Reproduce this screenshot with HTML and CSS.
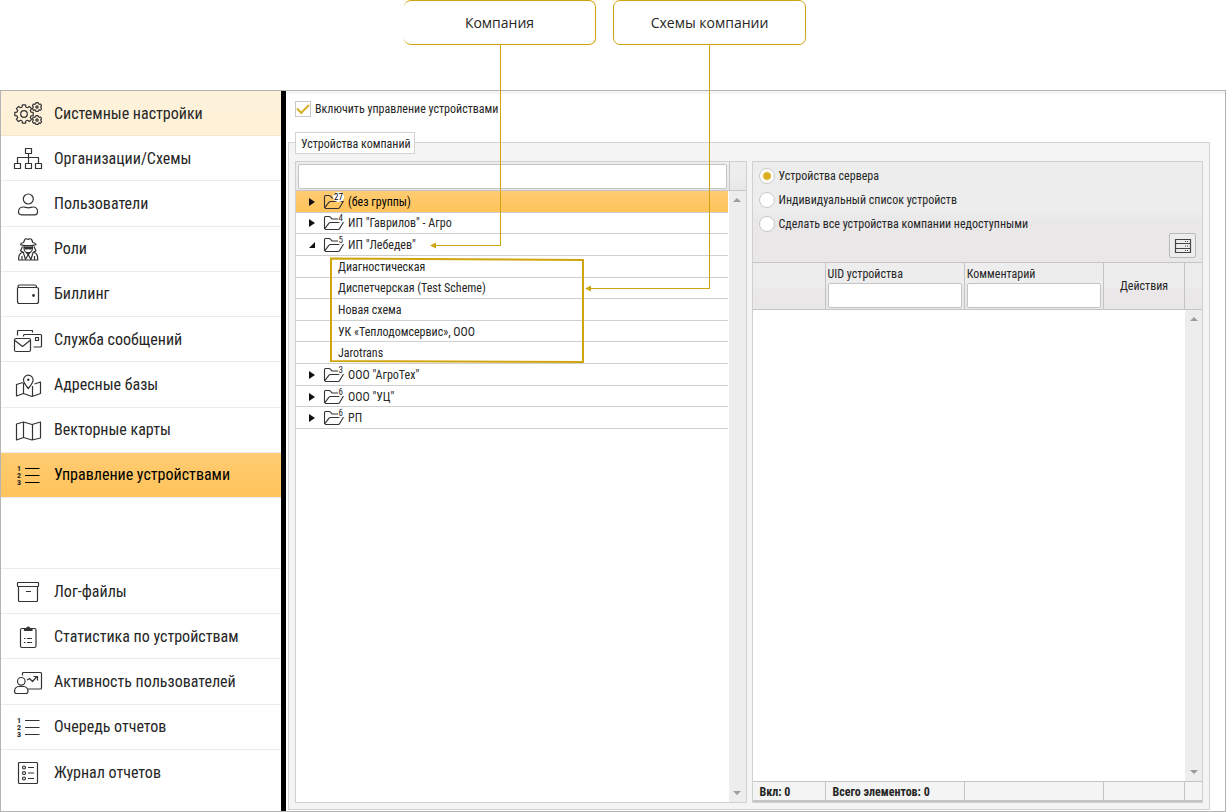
FILE: index.html
```html
<!DOCTYPE html>
<html lang="ru">
<head>
<meta charset="utf-8">
<title>Управление устройствами</title>
<link rel="stylesheet" href="styles.css">
</head>
<body>
<svg class="sprite" aria-hidden="true">
  <symbol id="gear" viewBox="-10 -10 20 20"><path d="M7-1.9 9.2-1.6 9.2 1.6 7 1.9 6.3 3.6 7.6 5.4 5.4 7.6 3.6 6.3 1.9 7 1.6 9.2-1.6 9.2-1.9 7-3.6 6.3-5.4 7.6-7.6 5.4-6.3 3.6-7 1.9-9.2 1.6-9.2-1.6-7-1.9-6.3-3.6-7.6-5.4-5.4-7.6-3.6-6.3-1.9-7-1.6-9.2 1.6-9.2 1.9-7 3.6-6.3 5.4-7.6 7.6-5.4 6.3-3.6z"/><circle r="3.3"/></symbol>
  <symbol id="cog" viewBox="-5 -5 10 10"><path d="M-1-4.400h2l.4 1.200 1 .5 1.200-.3 1 1.700-.8 1 0 .8.8 1-1 1.700-1.200-.3-1 .5-.4 1.200h-2l-.4-1.200-1-.5-1.200.3-1-1.700.8-1v-.8l-.8-1 1-1.700 1.200.3 1-.5z"/><circle r="1.100"/></symbol>
  <symbol id="folder" viewBox="0 0 22 16"><path d="M2.500 14V2.500q0-1 1-1H7q1 0 1.500.7L10 4h7.500q1 0 1 1V7.500M2.500 14.200 7 8.200q.5-.7 1.500-.7H21.200L17.500 13.700q-.4.800-1.400.800H3"/></symbol>
</svg>

<div class="callouts">
  <div class="callout callout-open">Компания</div>
  <div class="callout">Схемы компании</div>
</div>

<div class="app">
  <aside class="sidebar">
    <nav class="menu menu-main">
      <a class="item item-hover" href="#settings"><svg class="icon" viewBox="0 0 28 24"><use href="#gear" x="0" y="2" width="20" height="20"/><use href="#cog" x="18" y="0" width="10" height="10"/><use href="#cog" x="18" y="13" width="10" height="10"/></svg>Системные настройки</a>
      <a class="item" href="#orgs"><svg class="icon" viewBox="0 0 28 24"><path d="M11.500 1.500h6v5h-6zM.5 16.500h6v5h-6zM11.500 16.500h6v5h-6zM21.500 16.500h6v5h-6zM14.500 6.500v10M3.500 16.500v-6h21v6"/></svg>Организации/Схемы</a>
      <a class="item" href="#users"><svg class="icon" viewBox="0 0 28 24"><circle cx="14.300" cy="7" r="5"/><path d="M4.500 20c0-3.500 2.500-5 5-5 1.500 0 3 .8 4.800.8s3.300-.8 4.800-.8c2.500 0 4.500 1.500 4.500 5 0 2-1 2.800-3 2.800H7.500c-2 0-3-.8-3-2.800z"/></svg>Пользователи</a>
      <a class="item" href="#roles"><svg class="icon" viewBox="0 0 28 24"><path d="M6.500 7.500c2 1.600 13 1.600 15.500 0-.8-1.400-2-1.800-3.300-2-.5-2.500-1.500-4-2.500-3.700l-2 .6-2-.6c-1-.3-2 1.200-2.500 3.700-1.300.2-2.700.8-3.200 2zM10 9v2c0 3 2 5 4.200 5s4.300-2 4.300-5V9M8.500 9.500 6.500 14l2.700 1M20 9.500l2 4.500-2.700 1M9.200 15c-3 1-4.500 3-4.500 6v2h19v-2c0-3-1.500-5-4.400-6M9.200 15l2.300 7.500 2.700-5 2.700 5L19.300 15M8 19v4M20.500 19v4"/><path class="solid" d="M10.500 10h7.500l-1 2h-2l-.8-1-.8 1h-2zM12.500 15.500h3.500l-1.800 2z"/></svg>Роли</a>
      <a class="item" href="#billing"><svg class="icon" viewBox="0 0 28 24"><path d="M3.500 5.500v14q0 2 2 2h17q2 0 2-2v-12q0-2-2-2h-17q-1.500 0-1.500-1 0-1.500 1.500-1.500h15q2 0 2 2"/><circle class="solid" cx="19.500" cy="13.500" r=".8"/></svg>Биллинг</a>
      <a class="item" href="#messages"><svg class="icon" viewBox="0 0 28 24"><path d="M3.500 7.500v-4q0-1 1-1h14v2M9.500 8.500v-1q0-1 1-1H26.500q1 0 1 1v10.500q0 1-1 1H19.500M21.500 9.500h3v3h-3zM2 10.500H15q1.500 0 1.500 1.500V22q0 1.500-1.500 1.500H2Q.5 23.500.5 22V12Q.5 10.500 2 10.500zM1 12.500l7.500 6 7.500-6"/></svg>Служба сообщений</a>
      <a class="item" href="#addresses"><svg class="icon" viewBox="0 0 28 24"><path d="M9 9.500 2.500 11.500v11.500l7-2.500 8.500 3 8.500-3V9l-6 2M9.500 10v10.500M18.500 13v10M14.300 15.500C11 11.500 9.500 9.500 9.500 7a4.800 4.800 0 0 1 9.600 0c0 2.500-1.500 4.500-4.800 8.500z"/><circle class="solid" cx="14.300" cy="6.800" r=".6"/></svg>Адресные базы</a>
      <a class="item" href="#vector"><svg class="icon" viewBox="0 0 28 24"><path d="M2.500 6 9.500 4l8.500 2.500L26.500 4v16L18 22l-8.500-2.500L2.500 22zM9.500 4v15.500M18.500 6.500V22"/></svg>Векторные карты</a>
      <a class="item item-active" href="#devices" aria-current="page"><svg class="icon" viewBox="0 0 28 24"><path d="M11 5.500h14.500M11 12.500h14.500M11 19.500h14.500"/><g class="digits"><text x="3" y="8">1</text><text x="3" y="15">2</text><text x="3" y="22">3</text></g></svg>Управление устройствами</a>
    </nav>
    <nav class="menu menu-logs">
      <a class="item" href="#logs"><svg class="icon" viewBox="0 0 28 24"><path d="M4 2.500h20q.5 0 .5.500v3q0 .5-.5.500h-20q-.5 0-.5-.5V3q0-.5.500-.5zM4.500 6.500V20.500q0 1 1 1H22.500q1 0 1-1V6.500M12 11.500h5"/></svg>Лог-файлы</a>
      <a class="item" href="#stats"><svg class="icon" viewBox="0 0 28 24"><path d="M11 3.500H8q-1.500 0-1.500 1.500V21Q6.500 22.500 8 22.500H20.500q1.500 0 1.500-1.500V5q0-1.500-1.500-1.500h-3M10 13.500h1.500M13 13.500h5M10 17.500h1.500M13 17.500h5"/><path class="solid" d="M10.500 5.500v-2h2.200q0-1.500 1.500-1.500t1.600 1.500h2.200v2z"/></svg>Статистика по устройствам</a>
      <a class="item" href="#activity"><svg class="icon" viewBox="0 0 28 24"><path d="M8.500 5.500v-2q0-1 1-1H26.500q1 0 1 1v14.500q0 1-1 1H14M13 10l2.500-1.500 3 3 4.500-5M19.500 6.500h4v4"/><circle cx="7.300" cy="11.300" r="3.800"/><path d="M.5 21c0-2.500 2-4.500 4-4.500h5.500c2 0 4 2 4 4.500 0 1.500-.7 2.500-2 2.500H2.500c-1.300 0-2-1-2-2.500z"/></svg>Активность пользователей</a>
      <a class="item" href="#queue"><svg class="icon" viewBox="0 0 28 24"><path d="M11 5.500h14.500M11 12.500h14.500M11 19.500h14.500"/><g class="digits"><text x="3" y="8">1</text><text x="3" y="15">2</text><text x="3" y="22">3</text></g></svg>Очередь отчетов</a>
      <a class="item" href="#journal"><svg class="icon" viewBox="0 0 28 24"><path d="M5.500 1.500h17q1 0 1 1v19q0 1-1 1h-17q-1 0-1-1v-19q0-1 1-1zM14 6.500h6M14 12h6M14 17.500h6"/><circle cx="10" cy="6.500" r="1.500"/><circle cx="10" cy="12" r="1.500"/><circle cx="10" cy="17.500" r="1.500"/></svg>Журнал отчетов</a>
    </nav>
  </aside>

  <main class="content">
    <label class="check"><input type="checkbox" checked>Включить управление устройствами</label>
    <div class="tabs"><button class="tab" type="button">Устройства компаний</button></div>
    <div class="frame">
      <section class="panel">
        <div class="search"><div class="search-cell"><input class="field" type="text" aria-label="Поиск"></div><div class="search-end"></div></div>
        <div class="scroll-area">
          <ul class="tree">
            <li class="row row-selected"><span class="arrow"></span><span class="folder"><svg viewBox="0 0 22 16"><use href="#folder"/></svg><b class="count">27</b></span>(без группы)</li>
            <li class="row"><span class="arrow"></span><span class="folder"><svg viewBox="0 0 22 16"><use href="#folder"/></svg><b class="count">4</b></span>ИП "Гаврилов" - Агро</li>
            <li class="row"><span class="arrow arrow-open"></span><span class="folder"><svg viewBox="0 0 22 16"><use href="#folder"/></svg><b class="count">5</b></span>ИП "Лебедев"</li>
            <li class="row row-child">Диагностическая</li>
            <li class="row row-child">Диспетчерская (Test Scheme)</li>
            <li class="row row-child">Новая схема</li>
            <li class="row row-child">УК «Теплодомсервис», ООО</li>
            <li class="row row-child">Jarotrans</li>
            <li class="row"><span class="arrow"></span><span class="folder"><svg viewBox="0 0 22 16"><use href="#folder"/></svg><b class="count">3</b></span>ООО "АгроТех"</li>
            <li class="row"><span class="arrow"></span><span class="folder"><svg viewBox="0 0 22 16"><use href="#folder"/></svg><b class="count">6</b></span>ООО "УЦ"</li>
            <li class="row"><span class="arrow"></span><span class="folder"><svg viewBox="0 0 22 16"><use href="#folder"/></svg><b class="count">6</b></span>РП</li>
          </ul>
          <div class="scrollbar"><i class="up"></i><i class="down"></i></div>
        </div>
      </section>

      <section class="panel">
        <div class="options">
          <label class="radio"><input type="radio" name="mode" checked>Устройства сервера</label>
          <label class="radio"><input type="radio" name="mode">Индивидуальный список устройств</label>
          <label class="radio"><input type="radio" name="mode">Сделать все устройства компании недоступными</label>
          <button class="tool" type="button" aria-label="Список серверов"><svg viewBox="0 0 18 16"><path d="M1.500 1.500h15v13h-15zM1.500 5.500h15M1.500 10.500h15"/><path class="dots" d="M11 3.500h4M11 8h4M11 12.500h4"/></svg></button>
        </div>
        <table class="grid">
          <thead><tr>
            <th></th>
            <th><label class="filter">UID устройства<input class="field" type="text"></label></th>
            <th><label class="filter">Комментарий<input class="field" type="text"></label></th>
            <th class="actions">Действия</th>
            <th></th>
          </tr></thead>
          <tbody><tr><td></td><td class="scrollbar"><i class="up"></i><i class="down"></i></td></tr></tbody>
          <tfoot><tr><td>Вкл: 0</td><td>Всего элементов: 0</td><td></td><td></td><td></td></tr></tfoot>
        </table>
      </section>
    </div>
  </main>
</div>

<svg class="pointers" width="900" height="400" aria-hidden="true">
  <path class="line" d="M500.500 45V245.500H434"/>
  <path class="line" d="M709.500 45V288.500H589"/>
  <path class="outline" d="M331 258.500 583 260V362L331 361z"/>
  <path class="tip" d="M430 245.500l6-3v6zM585 288.500l6-3v6z"/>
</svg>
</body>
</html>
```

FILE: styles.css
```css
* { box-sizing: border-box; }

body {
  margin: 0;
  min-height: 100vh;
  display: flex;
  flex-direction: column;
  position: relative;
  background: #fff;
  color: #262626;
  font: 12px/16px "Roboto Condensed", "Liberation Sans Narrow", Roboto, sans-serif;
}

button, input { font: inherit; color: inherit; }

.sprite { position: absolute; width: 0; height: 0; }

/* Callouts */
.callouts { display: flex; gap: 17px; padding-left: 404px; height: 90px; }
.callout {
  width: 193px;
  height: 45px;
  display: flex;
  align-items: center;
  justify-content: center;
  border: 1px solid #cfa50f;
  border-radius: 7px;
  background: #fff;
  font: 14px/20px "Open Sans", "Noto Sans", sans-serif;
}
.callouts .callout-open { width: 192px; border-left: 0; }
.pointers { position: absolute; left: 0; top: 0; pointer-events: none; fill: none; stroke: #cfa50f; }
.pointers .line { shape-rendering: crispEdges; }
.pointers .outline { stroke-width: 2; }
.pointers .tip { fill: #cfa50f; stroke: none; }

/* Shell */
.app { flex: 1; display: flex; border: 1px solid #b4b4b4; }
.sidebar {
  flex: none;
  width: 285px;
  display: flex;
  flex-direction: column;
  justify-content: space-between;
  padding-bottom: 16px;
  border-right: 5px solid #000;
}
.menu { display: grid; grid-auto-rows: 1fr; }
.menu-main { min-height: 407px; }
.menu-logs { min-height: 227px; border-top: 1px solid #ebebeb; }
.item {
  display: flex;
  align-items: center;
  gap: 12px;
  padding: 1px 0 0 13px;
  border-bottom: 1px solid #ebebeb;
  color: #262626;
  font-size: 16px;
  line-height: 24px;
  text-decoration: none;
}
.menu-logs .item:last-child { border-bottom: 0; }
.item-hover { background: linear-gradient(#fef2dc, #fff1d6); border-color: #f0e6d2; }
.item-active { background: linear-gradient(#ffcc73, #ffc35a); color: #000; }
.icon { flex: none; width: 28px; height: 24px; overflow: visible; fill: none; stroke: #333; stroke-width: 1.2; stroke-linejoin: round; }
.item-active .icon { stroke: #000; }
.icon .solid { fill: #333; }
.digits { fill: #222; stroke: none; font-size: 8px; font-weight: 700; }

/* Content */
.content { flex: 1; min-width: 0; display: flex; flex-direction: column; padding: 7px 15px 1px 2px; border-top: 3px solid #f5f5f5; }
.check { display: flex; align-items: center; gap: 4px; height: 16px; padding-left: 7px; }
.check input {
  appearance: none;
  display: grid;
  place-items: center;
  margin: 0;
  width: 16px;
  height: 16px;
  border: 1px solid #c8c8c8;
  background: #fff;
}
.check input:checked::before {
  content: "";
  width: 10px;
  height: 5px;
  margin-bottom: 3px;
  border: solid #d6b02a;
  border-width: 0 0 2px 2px;
  transform: rotate(-45deg);
}
.tabs { position: relative; z-index: 1; padding: 15px 0 0 7px; margin-bottom: -12px; }
.tab { display: block; height: 22px; padding: 1px 3px 0 5px; border: 1px solid #d3d3d3; background: #fff; }
.frame { flex: 1; display: flex; gap: 5px; padding: 18px 6px 6px; border: 1px solid #d3d3d3; background: #f4f4f4; }
.panel { flex: 1; min-width: 0; display: flex; flex-direction: column; border: 1px solid #d0d0d0; background: #fff; }
.field { width: 100%; height: 25px; padding: 0 4px; border: 1px solid #c4c4c4; border-radius: 2px; background: #fff; }

.search { display: flex; border-bottom: 1px solid #c6c6c6; background: linear-gradient(#ededed 50%, #e9e7e8); }
.search-cell { flex: 1; padding: 2px 2px 1px; border-right: 1px solid #c6c6c6; display: flex; }
.search-end { width: 16px; }
.scroll-area { flex: 1; display: flex; }
.tree { flex: 1; align-self: flex-start; display: grid; grid-auto-rows: 1fr; min-height: 238px; margin: 0; padding: 0 1px 0 0; list-style: none; }
.row { display: flex; align-items: center; padding: 1px 0 0 13px; border-bottom: 1px solid #cfcfcf; }
.row-child { padding-left: 42px; }
.row-selected { background: linear-gradient(#ffcc73, #ffc35a); color: #000; }
.arrow { width: 6px; margin-right: 7px; border: solid transparent; border-width: 4px 0 4px 6px; border-left-color: #111; }
.arrow-open { width: 0; border-width: 0 0 6px 6px; border-left-color: transparent; border-bottom-color: #111; }
.folder { position: relative; display: flex; width: 22px; margin-right: 4px; }
.folder svg { width: 22px; height: 16px; fill: none; stroke: #333; stroke-width: 1.1; }
.count { position: absolute; right: 0; top: -2px; padding: 0 1px; border-radius: 5px; background: #fff; font-size: 9px; font-weight: 400; line-height: 10px; }

.scrollbar { width: 17px; display: flex; flex-direction: column; align-items: center; justify-content: space-between; padding: 7px 0; background: #ededed; }
.up, .down { border: solid transparent; border-width: 0 4px 4px; border-bottom-color: #9c9c9c; }
.down { border-width: 4px 4px 0; border-top-color: #9c9c9c; }

.options { position: relative; display: flex; flex-direction: column; align-items: flex-start; gap: 8px; padding: 6px 6px 30px; background: linear-gradient(#ededed 50%, #e9e7e8 60%); }
.radio { display: flex; align-items: center; gap: 4px; }
.radio input { appearance: none; margin: 0; width: 16px; height: 16px; border: 1px solid #c8c8c8; border-radius: 50%; background: #fff; }
.radio input:checked { background: radial-gradient(circle, #d8ae1c 3px, #fff 5px); }
.tool { position: absolute; right: 6px; bottom: 4px; width: 27px; height: 25px; padding: 0; display: grid; place-items: center; border: 1px solid #b9b9b9; border-radius: 2px; background: #ededed; }
.tool svg { width: 18px; height: 16px; fill: none; stroke: #444; stroke-width: 1.2; }
.tool .dots { stroke-dasharray: 1 1; }

.grid { flex: 1; display: grid; grid-template-rows: auto 1fr auto; }
.grid thead, .grid tbody, .grid tfoot { display: grid; }
.grid tr { display: grid; grid-template-columns: 73px 1fr 1fr 81px 17px; }
.grid tbody tr { grid-template-columns: 1fr 17px; }
.grid th, .grid td { padding: 0; font-weight: 400; text-align: left; }
.grid th { height: 48px; border: solid #c4c4c4; border-width: 1px 1px 1px 0; background: linear-gradient(#ededed 50%, #e9e7e8 60%); }
.grid th:last-child, .grid tfoot td:last-child { border-right: 0; }
.filter { display: block; padding: 3px 2px 2px; }
.filter .field { display: block; margin-top: 1px; }
.grid .actions { text-align: center; line-height: 46px; }
.grid .scrollbar { width: auto; padding: 7px 0; }
.grid tfoot td { height: 21px; padding-left: 7px; border: solid #c4c4c4; border-width: 1px 1px 2px 0; background: #f4f4f4; font-weight: 700; line-height: 20px; }
```
